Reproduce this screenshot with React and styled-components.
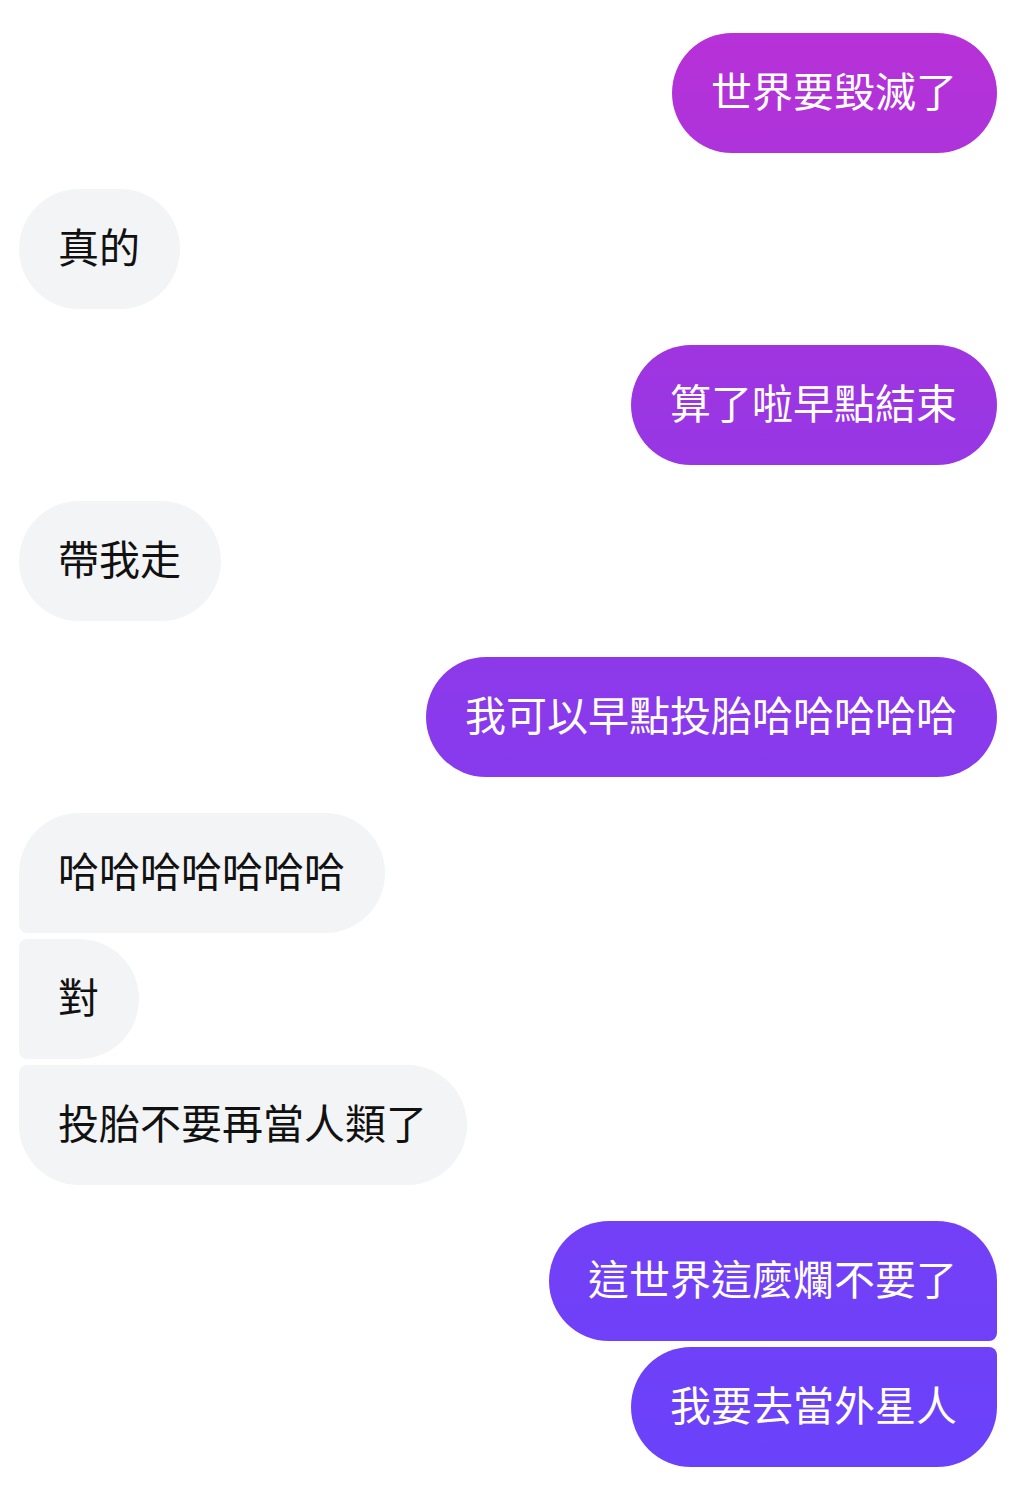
import React from "react";
import styled, { createGlobalStyle, css } from "styled-components";

const GlobalStyle = createGlobalStyle`
  html, body {
    margin: 0;
    padding: 0;
    background: #ffffff;
  }
  body {
    font-family: "Noto Sans CJK TC", "Noto Sans", sans-serif;
  }
`;

const StyledThread = styled.div`
  display: flex;
  flex-direction: column;
  gap: 36px;
  padding: 33px 24px 40px 19px;
`;

const StyledGroup = styled.div`
  display: flex;
  flex-direction: column;
  gap: 6px;
  align-items: ${(p) => (p.$mine ? "flex-end" : "flex-start")};
`;

const BIG = "60px";
const SMALL = "8px";

const cornerRadius = (mine, position) => {
  // position: single | first | middle | last
  const top = position === "single" || position === "first" ? BIG : SMALL;
  const bottom = position === "single" || position === "last" ? BIG : SMALL;
  if (mine) {
    return `${BIG} ${top} ${bottom} ${BIG}`;
  }
  return `${top} ${BIG} ${BIG} ${bottom}`;
};

const StyledBubble = styled.div`
  box-sizing: border-box;
  height: 120px;
  display: flex;
  align-items: center;
  padding: 0 40px 8px 39px;
  font-size: 41px;
  line-height: 1;
  white-space: nowrap;
  border-radius: ${(p) => cornerRadius(p.$mine, p.$position)};
  ${(p) =>
    p.$mine
      ? css`
          color: #ffffff;
          background: linear-gradient(
            to bottom,
            #b931d6 0px,
            #9a36e3 420px,
            #7d3df2 950px,
            #6942fb 1507px
          );
          background-attachment: fixed;
        `
      : css`
          color: #111111;
          background: #f3f4f6;
        `}
`;

const groups = [
  { mine: true, messages: ["世界要毀滅了"] },
  { mine: false, messages: ["真的"] },
  { mine: true, messages: ["算了啦早點結束"] },
  { mine: false, messages: ["帶我走"] },
  { mine: true, messages: ["我可以早點投胎哈哈哈哈哈"] },
  { mine: false, messages: ["哈哈哈哈哈哈哈", "對", "投胎不要再當人類了"] },
  { mine: true, messages: ["這世界這麼爛不要了", "我要去當外星人"] },
];

const positionOf = (index, length) => {
  if (length === 1) return "single";
  if (index === 0) return "first";
  if (index === length - 1) return "last";
  return "middle";
};

const App = () => {
  return (
    <>
      <GlobalStyle />
      <StyledThread>
        {groups.map((group, groupIndex) => (
          <StyledGroup key={groupIndex} $mine={group.mine}>
            {group.messages.map((text, i) => (
              <StyledBubble
                key={i}
                $mine={group.mine}
                $position={positionOf(i, group.messages.length)}
              >
                {text}
              </StyledBubble>
            ))}
          </StyledGroup>
        ))}
      </StyledThread>
    </>
  );
};

export default App;
